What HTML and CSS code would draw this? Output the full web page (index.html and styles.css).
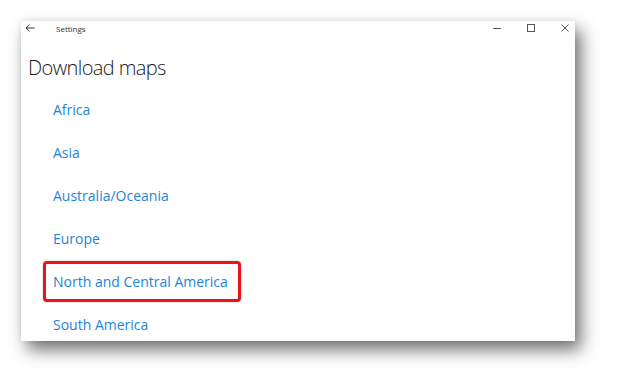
FILE: index.html
```html
<!DOCTYPE html>
<html lang="en">
<head>
    <meta charset="UTF-8">
    <title>Settings - Download maps</title>
    <link rel="stylesheet" href="styles.css">
</head>
<body>
    <div class="window">
        <div class="titlebar">
            <div class="title-left">
                <svg class="back" width="10" height="8" viewBox="0 0 10 8">
                    <path d="M4.5 0.5 L1 4 L4.5 7.5 M1 4 H9.5" fill="none" stroke="#333" stroke-width="1"/>
                </svg>
                <span class="app-name">Settings</span>
            </div>
            <div class="controls">
                <svg width="10" height="10" viewBox="0 0 10 10">
                    <path d="M1 5.5 H9" stroke="#555" stroke-width="1"/>
                </svg>
                <svg width="10" height="10" viewBox="0 0 10 10">
                    <rect x="1.5" y="1.5" width="7" height="7" fill="none" stroke="#555" stroke-width="1"/>
                </svg>
                <svg width="10" height="10" viewBox="0 0 10 10">
                    <path d="M1.5 1.5 L8.5 8.5 M8.5 1.5 L1.5 8.5" stroke="#555" stroke-width="1"/>
                </svg>
            </div>
        </div>

        <h1>Download maps</h1>

        <ul class="regions">
            <li><a href="#">Africa</a></li>
            <li><a href="#">Asia</a></li>
            <li><a href="#">Australia/Oceania</a></li>
            <li><a href="#">Europe</a></li>
            <li><a href="#" class="highlight">North and Central America</a></li>
            <li><a href="#">South America</a></li>
        </ul>
    </div>
</body>
</html>
```

FILE: styles.css
```css
html, body {
    height: 100%;
}

body {
    margin: 0;
    padding: 21px 0 0 21px;
    box-sizing: border-box;
    background-color: #ffffff;
    font-family: "Open Sans", "Noto Sans", Arial, sans-serif;
}

.window {
    width: 554px;
    height: 320px;
    background-color: #ffffff;
    box-shadow: 6px 9px 16px rgba(0, 0, 0, 0.55), 0 0 6px rgba(0, 0, 0, 0.08);
    overflow: hidden;
}

.titlebar {
    height: 14px;
    display: flex;
    align-items: center;
    justify-content: space-between;
}

.title-left {
    display: flex;
    align-items: center;
}

.back {
    margin-left: 4px;
}

.app-name {
    margin-left: 21px;
    font-size: 8px;
    color: #333;
}

.controls {
    display: flex;
    align-items: center;
    gap: 24px;
    padding-right: 5px;
}

h1 {
    margin: 19px 0 7px 7px;
    font-size: 20px;
    line-height: 28px;
    font-weight: 300;
    letter-spacing: -0.6px;
    color: #1a1a1a;
}

.regions {
    list-style: none;
    margin: 0;
    padding: 0 0 0 22px;
    display: flex;
    flex-direction: column;
    align-items: flex-start;
    gap: 2px;
}

.regions a {
    display: inline-block;
    padding: 0 10px 0 7px;
    border: 3px solid transparent;
    border-radius: 4px;
    font-size: 14px;
    line-height: 35px;
    color: #1e84d8;
    text-decoration: none;
}

.regions a.highlight {
    border-color: #e8141c;
    box-shadow: 0 0 2px rgba(0, 0, 0, 0.3);
}
```
